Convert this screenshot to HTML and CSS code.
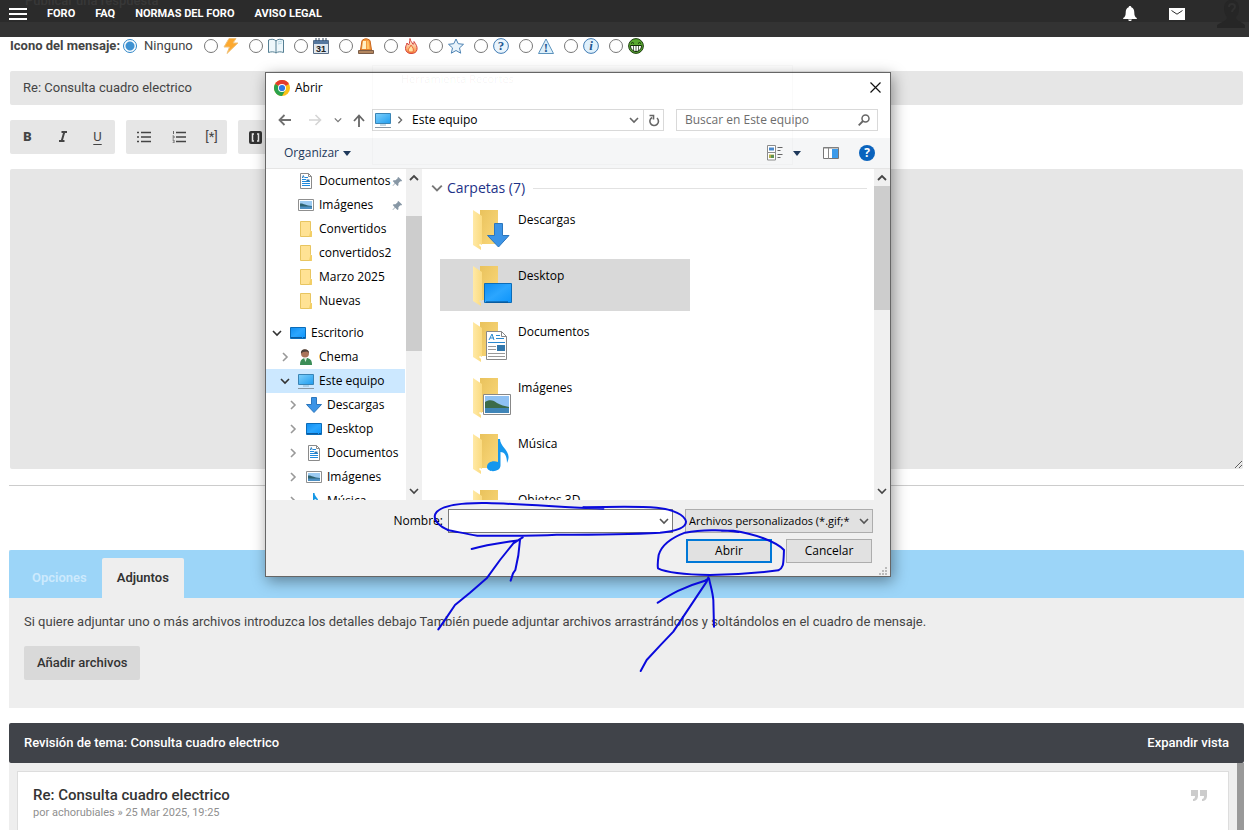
FILE: index.html
```html
<!DOCTYPE html>
<html lang="es">
<head>
    <meta charset="UTF-8">
    <meta name="viewport" content="width=device-width, initial-scale=1.0">
    <title>Publicar una respuesta</title>
    <link rel="stylesheet" href="styles.css">
</head>
<body>
    <!-- shared icons -->
    <svg class="sprite" aria-hidden="true">
        <defs>
            <linearGradient id="gBlue" x1="0" y1="0" x2="1" y2="1">
                <stop offset="0" stop-color="#0f8df0"/><stop offset=".5" stop-color="#2ba6ff"/><stop offset="1" stop-color="#0c94fb"/>
            </linearGradient>
            <linearGradient id="gScreen" x1="0" y1="0" x2="1" y2="1">
                <stop offset="0" stop-color="#7fd0fb"/><stop offset="1" stop-color="#1f9df0"/>
            </linearGradient>
            <linearGradient id="gFolder" x1="0" y1="0" x2="1" y2="0">
                <stop offset="0" stop-color="#ffe9a6"/><stop offset="1" stop-color="#fbdb80"/>
            </linearGradient>
            <linearGradient id="gBack" x1="0" y1="0" x2="1" y2="1">
                <stop offset="0" stop-color="#e9c25c"/><stop offset="1" stop-color="#fbd97c"/>
            </linearGradient>
            <linearGradient id="gFire" x1="0" y1="0" x2="0" y2="1">
                <stop offset="0" stop-color="#fff"/><stop offset="1" stop-color="#f98b34"/>
            </linearGradient>
        </defs>
        <symbol id="chev-down" viewBox="0 0 10 10"><path d="M1 3l4 4 4-4" fill="none" stroke="currentColor" stroke-width="1.6"/></symbol>
        <symbol id="chev-up" viewBox="0 0 10 10"><path d="M1 7l4-4 4 4" fill="none" stroke="currentColor" stroke-width="1.8"/></symbol>
        <symbol id="chev-right" viewBox="0 0 10 10"><path d="M3 1l4 4-4 4" fill="none" stroke="currentColor" stroke-width="1.6"/></symbol>
        <symbol id="pc" viewBox="0 0 16 16"><path d="M.5 1.5h15v10H.5z" fill="url(#gScreen)" stroke="#3a84b5"/><path d="M5 13h6" stroke="#8ab4cf"/><path d="M0 15.500h16" stroke="#8796a3"/></symbol>
        <symbol id="desktop" viewBox="0 0 16 16"><path d="M.5 2.500h15v11H.5z" fill="url(#gBlue)" stroke="#0b6cb8"/><path d="M1 12.500h14" stroke="#0a5aa0" stroke-dasharray="1 0 10 1"/></symbol>
        <symbol id="doc" viewBox="0 0 16 16"><path d="M2.500.5h8l3 3v12h-11z" fill="#fff" stroke="#8a8a8a"/><path d="M10.500.5v3h3" fill="none" stroke="#8a8a8a"/><path d="M4 6.500h4M4 8.500h8M4 10.500h8M4 12.500h8M7 4.500h3" stroke="#1f8ade"/><path d="M4.300 5l1-2.500 1 2.500" fill="none" stroke="#2f7fc0"/><path d="M8.500 6.500h3v2h-3z" fill="#3278ad"/></symbol>
        <symbol id="picture" viewBox="0 0 16 16"><path d="M.5 2.500h15v11H.5z" fill="#fff" stroke="#8f8f8f"/><path d="M2 4h12v8H2z" fill="#9ccbf2"/><path d="M2 6.500c3-.5 5 2 12 2.500V10H2z" fill="#2d6270"/><path d="M2 9.500h12V12H2z" fill="#4c8fc2"/></symbol>
        <symbol id="down" viewBox="0 0 16 16"><path d="M5.500.5h5v7h5L8 15.500.500 7.500h5z" fill="#3c94e6" stroke="#2c76bd"/></symbol>
        <symbol id="minifolder" viewBox="0 0 16 16"><path d="M2.500.5h10v9l1 1v5h-11z" fill="#ffe294" stroke="#e8c560"/><path d="M12.500 9.500l1.500 1.500v4.500h-3z" fill="#f3cf66"/></symbol>
        <symbol id="note" viewBox="0 0 16 16"><path d="M7 0h1.500c0 4 5 5 3.500 10-.5-3-2-4-3.500-4v7a3 2.500 0 1 1-1.500-2z" fill="#1597e5"/></symbol>
        <symbol id="person" viewBox="0 0 16 16"><circle cx="7" cy="4.500" r="4" fill="#a9745a"/><path d="M3 4.500C2-1 11-1 11 4L9 2.500 5 3z" fill="#4b4039"/><path d="M2 16c0-5 2-7 6-7 4 0 6 2 6 7z" fill="#3b8d57"/><path d="M6 9l1.500 4 1.500-4z" fill="#dceee0"/></symbol>
        <symbol id="pin" viewBox="0 0 12 12"><path d="M7 1l4 4-1 1-1-.3L7 8v2L6 11 3.500 8.500 1 11l-.5-.5L3 8 .800 5.500l1-1h2L6.200 2.500 6 2z" fill="#8797a5"/></symbol>
        <symbol id="bigfolder" viewBox="0 0 40 40"><path d="M8 0h18v34H8z" fill="url(#gBack)"/><path d="M1 0l9 6v29l-2-1-1 1 2 2v3l-8-5z" fill="url(#gFolder)"/></symbol>
    </svg>

    <header class="topbar">
        <span class="behind-title">Publicar una respuesta</span>
        <button class="burger" aria-label="Menú"><span></span><span></span><span></span></button>
        <nav class="topnav">
            <a href="#">FORO</a>
            <a href="#">FAQ</a>
            <a href="#">NORMAS DEL FORO</a>
            <a href="#">AVISO LEGAL</a>
        </nav>
        <div class="topicons">
            <a href="#" aria-label="Notificaciones"><svg width="14" height="16" viewBox="0 0 14 16"><path d="M7 0c1 0 1.300.7 1.300 1.300C10.500 2 11.300 4 11.300 6.500c0 3 .7 4.500 2.500 5.500v1H.200v-1c1.800-1 2.500-2.500 2.500-5.500 0-2.500.8-4.500 3-5.200C5.700.7 6 0 7 0zM5.200 13.500h3.600C8.700 15.500 5.300 15.500 5.200 13.500z" fill="#fff"/></svg></a>
            <a href="#" aria-label="Mensajes"><svg width="16" height="12" viewBox="0 0 16 12"><path d="M0 0h16v12H0z" fill="#fff"/><path d="M2.500 2.500L8 6.200l5.500-3.700" fill="none" stroke="#2b2b2b"/></svg></a>
            <a href="#" aria-label="Perfil"><svg width="28" height="28" viewBox="0 0 28 28"><path d="M7 8c0-11 15-11 15 0 0 5-1 7-3 9 0 4 3 3 9 8v3H0v-3c6-4 10-4 10-8C8 15 7 12 7 8z" fill="#262626"/><path d="M12 7c0-4 6-4 6 0 0 2-3 2-3 5" fill="none" stroke="#303030" stroke-width="2"/></svg></a>
        </div>
    </header>

    <main class="page">
        <fieldset class="icons-row" aria-label="Icono del mensaje">
            <span class="icons-label">Icono del mensaje:</span>
            <label class="none"><input type="radio" name="icon" checked> Ninguno</label>
            <label class="pick"><input type="radio" name="icon" aria-label="Rayo"><svg viewBox="0 0 16 16"><path d="M6 .5h7L10 5h5L4 15.500l2.500-6.500H1z" fill="#fda92f" stroke="#f0c27c"/></svg></label>
            <label class="pick"><input type="radio" name="icon" aria-label="Libro"><svg viewBox="0 0 16 16"><path d="M.5 2C4 .8 6 1 8 3c2-2 4-2.200 7.500-1v12.500c-3-1-5.500-1-7.500.5-2-1.500-4.500-1.500-7.500-.5z" fill="#eef7fb" stroke="#557f93"/><path d="M8 3v12" stroke="#557f93"/><path d="M10 4l4-1M10 6l4-1" stroke="#b8d9e6"/></svg></label>
            <label class="pick"><input type="radio" name="icon" aria-label="Calendario"><svg viewBox="0 0 16 16"><path d="M.5 2.500h15v13H.5z" fill="#dfe7ef" stroke="#596d86"/><path d="M1 2h14v4H1z" fill="#54779f"/><path d="M3 0v3M6 0v3M10 0v3M13 0v3" stroke="#394a61"/><text x="8" y="14" class="cal-num">31</text></svg></label>
            <label class="pick"><input type="radio" name="icon" aria-label="Sirena"><svg viewBox="0 0 16 16"><path d="M2.500 12L4 2.500Q8-1 12 2.500L13.500 12z" fill="#f59a3d" stroke="#c9661b"/><path d="M5 3h3v8H4z" fill="#fff0c4"/><path d="M9 3h1.500l1 8H9z" fill="#ffc467"/><path d="M.5 12.500h15v3H.5z" fill="#b3865f" stroke="#7b5c47"/></svg></label>
            <label class="pick"><input type="radio" name="icon" aria-label="Fuego"><svg viewBox="0 0 16 16"><path d="M7 .5c.5 3 2 3.500 3 6 1-.5 1-2 1-3 2 3 3.500 5 3 8-.5 3-3 4-6 4s-5.500-2-5.500-5C2.500 8 3.500 7 4 5l1.500 2C7 5 6.500 3 7 .5z" fill="url(#gFire)" stroke="#d5413b"/><path d="M8 7c2 3 3 4 2 7H6c-2-3 1-4 2-7z" fill="#ffe2a0" stroke="#ec6a3c"/></svg></label>
            <label class="pick"><input type="radio" name="icon" aria-label="Estrella"><svg viewBox="0 0 16 16"><path d="M8 1l2.200 4.700 5.300.6-4 3.600 1.200 5.300L8 12.500l-4.700 2.700 1.200-5.300-4-3.600 5.300-.6z" fill="#e8f3fb" stroke="#4c82b3"/></svg></label>
            <label class="pick"><input type="radio" name="icon" aria-label="Pregunta"><svg viewBox="0 0 16 16"><circle cx="8" cy="8" r="7.400" fill="#e9f4fc" stroke="#3f7ab3"/><text x="8" y="12" class="glyph">?</text></svg></label>
            <label class="pick"><input type="radio" name="icon" aria-label="Aviso"><svg viewBox="0 0 16 16"><path d="M8 1l7.500 14.500H.5z" fill="#dceffa" stroke="#5c93bd"/><text x="8" y="14" class="glyph">!</text></svg></label>
            <label class="pick"><input type="radio" name="icon" aria-label="Información"><svg viewBox="0 0 16 16"><circle cx="8" cy="8" r="7.400" fill="#dff0fb" stroke="#3f7ab3"/><text x="8" y="12" class="glyph slant">i</text></svg></label>
            <label class="pick"><input type="radio" name="icon" aria-label="Risa"><svg viewBox="0 0 16 16"><circle cx="8" cy="8" r="7.400" fill="#58a82f" stroke="#1f3d12"/><path d="M3 5.500q1.500-2 3 0M10 5.500q1.500-2 3 0" fill="none" stroke="#132c0a"/><path d="M2.500 7.500h11c0 8-11 8-11 0z" fill="#fff" stroke="#132c0a"/><path d="M5.500 8v5M8 8v5.500M10.500 8v5" stroke="#132c0a" stroke-width=".7"/></svg></label>
        </fieldset>

        <input class="subject" type="text" aria-label="Asunto" value="Re: Consulta cuadro electrico">

        <div class="editbar">
            <div class="group">
                <button class="b" aria-label="Negrita">B</button>
                <button class="i" aria-label="Cursiva"><svg width="10" height="12" viewBox="0 0 10 12"><path d="M3.500 1H9M1 10h5.500M6.300 1L3.700 10" fill="none" stroke="#444" stroke-width="2"/></svg></button>
                <button class="u" aria-label="Subrayado">U</button>
            </div>
            <div class="group narrow">
                <button aria-label="Lista"><svg width="14" height="12" viewBox="0 0 14 12"><path d="M4 1.500h10M4 6h10M4 10.500h10M0 1.500h2M0 6h2M0 10.500h2" stroke="#444" stroke-width="1.300"/></svg></button>
                <button aria-label="Lista numerada"><svg width="14" height="12" viewBox="0 0 14 12"><path d="M4 1.500h10M4 6h10M4 10.500h10" stroke="#444" stroke-width="1.300"/><path d="M1.500 0v3M.5 5h1.500v2H.5M.5 9h1.500v3H.5" fill="none" stroke="#666"/></svg></button>
                <button aria-label="Elemento de lista">[*]</button>
            </div>
            <div class="group">
                <button aria-label="Código"><svg width="13" height="13" viewBox="0 0 13 13"><rect width="13" height="13" rx="2" fill="#333"/><path d="M5 3H3.500v7H5M8 3h1.500v7H8" fill="none" stroke="#e6e6e6" stroke-width="1.500"/></svg></button>
            </div>
        </div>

        <textarea class="message" aria-label="Mensaje"></textarea>
        <hr>

        <section class="attach">
            <div class="tabs">
                <a href="#" class="tab">Opciones</a>
                <a href="#" class="tab active">Adjuntos</a>
            </div>
            <div class="attach-body">
                <p>Si quiere adjuntar uno o más archivos introduzca los detalles debajo También puede adjuntar archivos arrastrándolos y soltándolos en el cuadro de mensaje.</p>
                <button class="add">Añadir archivos</button>
            </div>
        </section>

        <section class="review">
            <h3 class="review-head"><span>Revisión de tema: Consulta cuadro electrico</span><a href="#">Expandir vista</a></h3>
            <div class="review-list">
                <article class="post">
                    <div>
                        <h4>Re: Consulta cuadro electrico</h4>
                        <p>por achorubiales » 25 Mar 2025, 19:25</p>
                    </div>
                    <button aria-label="Citar"><svg width="16" height="11" viewBox="0 0 16 11"><path d="M0 0h7v6c0 3-2 5-5 5V9c1.500 0 2-1 2-3H0zM9 0h7v6c0 3-2 5-5 5V9c1.500 0 2-1 2-3H9z" fill="#ccc"/></svg></button>
                </article>
                <div class="review-scroll"></div>
            </div>
        </section>
    </main>

    <div class="dialog" role="dialog" aria-label="Abrir">
        <div class="titlebar">
            <svg width="16" height="16" viewBox="0 0 16 16"><circle cx="8" cy="8" r="8" fill="#fbc116"/><path d="M8 8L1.070 4A8 8 0 0 1 14.930 4z" fill="#e33b2e"/><path d="M1.070 4A8 8 0 0 0 8 16l3.500-6L8 8z" fill="#2ba24c"/><circle cx="8" cy="8" r="4" fill="#fff"/><circle cx="8" cy="8" r="3.100" fill="#2f78e4"/></svg>
            <span>Abrir</span>
            <button aria-label="Cerrar"><svg width="11" height="11" viewBox="0 0 11 11"><path d="M.5.5l10 10M10.500.5l-10 10" stroke="#111" stroke-width="1.200"/></svg></button>
        </div>

        <div class="navbar">
            <div class="arrows">
                <button aria-label="Atrás"><svg width="14" height="12" viewBox="0 0 14 12"><path d="M13 6H2M6.500 1L1.500 6l5 5" fill="none" stroke="#707070" stroke-width="1.800"/></svg></button>
                <button aria-label="Adelante"><svg width="14" height="12" viewBox="0 0 14 12"><path d="M1 6h11M7.500 1l5 5-5 5" fill="none" stroke="#d5d5d5" stroke-width="1.600"/></svg></button>
                <button aria-label="Recientes"><svg class="c8"><use href="#chev-down"/></svg></button>
                <button aria-label="Subir"><svg width="12" height="13" viewBox="0 0 12 13"><path d="M6 13V2M1 7l5-5.500L11 7" fill="none" stroke="#666" stroke-width="1.800"/></svg></button>
            </div>
            <div class="address">
                <svg class="s16"><use href="#pc"/></svg>
                <svg class="c8"><use href="#chev-right"/></svg>
                <span>Este equipo</span>
                <svg class="c10 end"><use href="#chev-down"/></svg>
                <button aria-label="Actualizar"><svg width="12" height="13" viewBox="0 0 12 13"><path d="M9 4A4.300 4.300 0 1 1 4 3.500M1.500 1.500h4v4" fill="none" stroke="#666" stroke-width="1.600"/></svg></button>
            </div>
            <div class="search">
                <input type="text" aria-label="Buscar" placeholder="Buscar en Este equipo">
                <svg width="12" height="12" viewBox="0 0 12 12"><circle cx="7.500" cy="4.500" r="3.500" fill="none" stroke="#666" stroke-width="1.500"/><path d="M5 7L.700 11.300" stroke="#666" stroke-width="1.800"/></svg>
            </div>
        </div>

        <div class="tools">
            <button class="organize">Organizar <svg width="8" height="5" viewBox="0 0 8 5"><path d="M0 0h8L4 5z" fill="#1e395b"/></svg></button>
            <button aria-label="Vista"><svg width="34" height="16" viewBox="0 0 34 16"><path d="M.5.5h8v7h-8zM.5 7.500h8v7.500h-8z" fill="#fff" stroke="#8a8a8a"/><path d="M2 2.500h5v3H2z" fill="#4a89cc"/><path d="M2 9.500h5v3.500H2z" fill="#b6b04a"/><path d="M4 10h3v3H4z" fill="#5f9150"/><path d="M10.500 2.500h5M10.500 5.500h3M10.500 9.500h5M10.500 12.500h3" stroke="#666"/><path d="M26 6h8l-4 5z" fill="#1e395b"/></svg></button>
            <button aria-label="Panel de vista previa"><svg width="16" height="12" viewBox="0 0 16 12"><path d="M.5.5h15v11H.5z" fill="#fff" stroke="#777"/><path d="M.5 1h15M5.500 1v11" stroke="#888"/><path d="M9 2h6v9H9z" fill="#3d9bea"/></svg></button>
            <button class="help" aria-label="Ayuda">?</button>
        </div>

        <div class="panes">
            <ul class="tree">
                <li class="l2"><svg class="s16"><use href="#doc"/></svg>Documentos<svg class="pin"><use href="#pin"/></svg></li>
                <li class="l2"><svg class="s16"><use href="#picture"/></svg>Imágenes<svg class="pin"><use href="#pin"/></svg></li>
                <li class="l2"><svg class="s16"><use href="#minifolder"/></svg>Convertidos</li>
                <li class="l2"><svg class="s16"><use href="#minifolder"/></svg>convertidos2</li>
                <li class="l2"><svg class="s16"><use href="#minifolder"/></svg>Marzo 2025</li>
                <li class="l2 last"><svg class="s16"><use href="#minifolder"/></svg>Nuevas</li>
                <li class="n1 open"><svg class="c10"><use href="#chev-down"/></svg><svg class="s16"><use href="#desktop"/></svg>Escritorio</li>
                <li class="n2"><svg class="c10"><use href="#chev-right"/></svg><svg class="s16"><use href="#person"/></svg>Chema</li>
                <li class="n2 open selected"><svg class="c10"><use href="#chev-down"/></svg><svg class="s16"><use href="#pc"/></svg>Este equipo</li>
                <li class="n3"><svg class="c10"><use href="#chev-right"/></svg><svg class="s16"><use href="#down"/></svg>Descargas</li>
                <li class="n3"><svg class="c10"><use href="#chev-right"/></svg><svg class="s16"><use href="#desktop"/></svg>Desktop</li>
                <li class="n3"><svg class="c10"><use href="#chev-right"/></svg><svg class="s16"><use href="#doc"/></svg>Documentos</li>
                <li class="n3"><svg class="c10"><use href="#chev-right"/></svg><svg class="s16"><use href="#picture"/></svg>Imágenes</li>
                <li class="n3"><svg class="c10"><use href="#chev-right"/></svg><svg class="s16"><use href="#note"/></svg>Música</li>
            </ul>
            <div class="scroll tree-scroll">
                <svg class="c10"><use href="#chev-up"/></svg>
                <span class="thumb"></span>
                <svg class="c10"><use href="#chev-down"/></svg>
            </div>
            <div class="files">
                <h2><svg class="c12"><use href="#chev-down"/></svg>Carpetas (7)</h2>
                <ul>
                    <li><svg viewBox="0 0 40 40"><use href="#bigfolder"/><path d="M22.500 13.500h8v12h6.500L26.500 37 15.500 25.500h7z" fill="#3c94e6" stroke="#2c76bd"/></svg>Descargas</li>
                    <li class="selected"><svg viewBox="0 0 40 40"><use href="#bigfolder"/><path d="M12.500 17.500h27v19h-27z" fill="url(#gBlue)" stroke="#0b6cb8"/><path d="M14 36h22" stroke="#064b86"/></svg>Desktop</li>
                    <li><svg viewBox="0 0 40 40"><use href="#bigfolder"/><path d="M14.500 9.500h15l5 5v23h-20z" fill="#fff" stroke="#888"/><path d="M29.500 9.500v5h5" fill="none" stroke="#888"/><path d="M17 18l3-6 2 6M18 16h4" fill="none" stroke="#2a88cf"/><path d="M24 13.500h4M24 16.500h8M16 20.500h17" stroke="#2a88cf"/><path d="M16 24.500h8M16 27.500h8M16 31.500h17M16 34.500h17" stroke="#999"/><path d="M25 23h8v6h-8z" fill="#3278ad"/></svg>Documentos</li>
                    <li><svg viewBox="0 0 40 40"><use href="#bigfolder"/><path d="M11.500 16.500h27v20h-27z" fill="#fff" stroke="#888"/><path d="M13 18h24v17H13z" fill="#8fc1f3"/><path d="M13 24c4-3 9-2 12 1 3 2 8 3 12 4v2H13z" fill="#3c6b49"/><path d="M13 30h24v5H13z" fill="#3f85b8"/></svg>Imágenes</li>
                    <li><svg viewBox="0 0 40 40"><use href="#bigfolder"/><path d="M26 5h2c0 9 13 12 7 24 0-8-3-11-6.500-11v13.500c0 7-13.500 7.500-13.500 1.500 0-5 6-7 11-5z" fill="#1597ee"/></svg>Música</li>
                    <li><svg viewBox="0 0 40 40"><use href="#bigfolder"/></svg>Objetos 3D</li>
                </ul>
            </div>
            <div class="scroll files-scroll">
                <svg class="c10"><use href="#chev-up"/></svg>
                <span class="thumb"></span>
                <svg class="c10"><use href="#chev-down"/></svg>
            </div>
        </div>

        <div class="foot">
            <div class="foot-row">
                <label for="fname">Nombre:</label>
                <div class="combo"><input type="text" id="fname"><svg class="c10"><use href="#chev-down"/></svg></div>
                <div class="filter">
                    <select aria-label="Tipo de archivo"><option>Archivos personalizados (*.gif;*</option></select>
                    <svg class="c10"><use href="#chev-down"/></svg>
                </div>
            </div>
            <div class="foot-row buttons">
                <button class="primary">Abrir</button>
                <button>Cancelar</button>
            </div>
            <svg class="grip" width="9" height="9" viewBox="0 0 9 9"><path d="M6 0h2v2H6zM6 3h2v2H6zM6 6h2v2H6zM3 3h2v2H3zM3 6h2v2H3zM0 6h2v2H0z" fill="#bbb"/></svg>
        </div>
    </div>

    <div class="ghost">Herramienta Recortes</div>

    <!-- pen marks -->
    <svg class="ink" width="510" height="190" viewBox="0 0 1530 570">
        <path d="M180 122C140 108 130 85 136 72C150 45 220 38 290 39C400 42 500 50 640 56M580 52C660 50 740 48 800 53C850 58 885 75 888 95C888 115 850 124 810 128C700 134 600 134 500 134C420 138 330 137 262 137C230 132 205 126 172 120"/>
        <path d="M145 418L168 385L195 345L240 308L290 265L330 210L370 160L398 142M245 177C290 164 340 158 390 150C388 180 385 205 376 240L369 250L362 272"/>
        <path d="M1045 126C1000 118 930 120 885 128C840 145 815 165 806 195C803 215 802 225 804 235C830 248 900 254 960 255C1040 254 1110 248 1165 241C1182 232 1180 220 1182 180C1160 155 1090 130 1030 122L995 122"/>
        <path d="M752 543L770 510L810 467L850 425L900 350L950 275L955 262M803 338C840 315 880 290 945 272L957 265C962 290 968 305 970 330L972 410"/>
    </svg>
</body>
</html>
```
FILE: styles.css
```css
* {
    box-sizing: border-box;
}

body {
    margin: 0;
    min-height: 100vh;
    display: flex;
    flex-direction: column;
    position: relative;
    background: #fff;
    color: #444;
    font-family: Roboto, "Liberation Sans", sans-serif;
    font-size: 13px;
    line-height: 18px;
}

button, input, select, textarea {
    font: inherit;
    color: inherit;
    margin: 0;
}

button {
    border: none;
    background: none;
    padding: 0;
}

a {
    color: inherit;
    text-decoration: none;
}

svg {
    display: block;
    flex: none;
}

ul, h2, h3, h4, p {
    margin: 0;
    padding: 0;
    list-style: none;
}

.sprite {
    position: absolute;
    width: 0;
    height: 0;
}

.s16 { width: 16px; height: 16px; }
.c8 { width: 8px; height: 8px; }
.c10 { width: 10px; height: 10px; }
.c12 { width: 12px; height: 12px; }

/* top bar */
.topbar {
    position: relative;
    display: flex;
    align-items: flex-start;
    height: 37px;
    padding: 0 4px 0 9px;
    background: linear-gradient(#2b2b2b 22px, #333 22px);
    color: #fff;
    overflow: hidden;
}

.behind-title {
    position: absolute;
    left: 25px;
    top: -8px;
    font-size: 13px;
    font-weight: 500;
    color: #383838;
}

.burger {
    position: relative;
    display: flex;
    flex-direction: column;
    gap: 3px;
    width: 18px;
    margin-top: 8px;
}

.burger span {
    height: 2px;
    background: #fff;
}

.topnav {
    position: relative;
    display: flex;
    gap: 20px;
    margin: 5px 0 0 20px;
    font-size: 11px;
    font-weight: 700;
}

.topicons {
    display: flex;
    align-items: center;
    gap: 32px;
    height: 28px;
    margin-left: auto;
}

/* posting form */
.page {
    flex: 1;
    display: flex;
    flex-direction: column;
    padding: 0 5px 0 9px;
}

.icons-row {
    display: flex;
    align-items: center;
    height: 19px;
    border: 0;
    margin: 0 1px;
    padding: 0;
}

.icons-label {
    font-weight: 700;
}

.icons-row input {
    appearance: none;
    width: 14px;
    height: 14px;
    border: 1px solid #777;
    border-radius: 50%;
    background: #fff;
}

.icons-row input:checked {
    border-color: #2f86c8;
    background: radial-gradient(#3f92d2 4px, #fff 5px);
}

.none, .pick {
    display: flex;
    align-items: center;
}

.none {
    gap: 7px;
    margin: 0 11px 0 3px;
}

.pick {
    gap: 5px;
    width: 45px;
}

.pick svg {
    width: 16px;
    height: 16px;
}

.glyph {
    font: bold 13px "Liberation Serif", serif;
    text-anchor: middle;
    fill: #1f5790;
}

.slant {
    font-style: italic;
}

.cal-num {
    font: bold 9px "Liberation Sans", sans-serif;
    text-anchor: middle;
    fill: #222;
}

.subject {
    height: 34px;
    margin: 15px 1px;
    padding: 0 13px 2px;
    border: 0;
    border-radius: 2px;
    background: #e6e6e6;
}

.editbar {
    display: flex;
    gap: 11px;
    margin: 0 1px 15px;
}

.group {
    display: flex;
    height: 34px;
    border-radius: 2px;
    background: #e6e6e6;
}

.group button {
    display: flex;
    align-items: center;
    justify-content: center;
    width: 35px;
}

.group .b {
    font-weight: 900;
}

.group .u {
    text-decoration: underline;
    text-underline-offset: 3px;
}

.narrow button:last-child {
    width: 31px;
}

.message {
    height: 300px;
    margin: 0 1px;
    border: 0;
    border-radius: 2px;
    background: #e6e6e6;
    resize: vertical;
}

hr {
    width: 100%;
    height: 1px;
    margin: 16px 0 64px;
    border: 0;
    background: #ccc;
}

/* attachments */
.attach {
    background: #eee;
}

.tabs {
    display: flex;
    align-items: flex-end;
    height: 48px;
    padding-left: 8px;
    border-radius: 2px 2px 0 0;
    background: #9cd5f8;
}

.tab {
    height: 40px;
    padding: 0 15px;
    border-radius: 2px 2px 0 0;
    font-weight: 600;
    line-height: 40px;
    color: #cdeafd;
}

.tab.active {
    background: #eee;
    color: #333;
}

.attach-body {
    padding: 15px 15px 28px;
}

.add {
    margin-top: 15px;
    padding: 8px 13px;
    border-radius: 2px;
    background: #d9d9d9;
    font-weight: 500;
    color: #333;
}

/* topic review */
.review {
    flex: 1;
    display: flex;
    flex-direction: column;
    margin-top: 15px;
}

.review-head {
    display: flex;
    justify-content: space-between;
    padding: 11px 15px;
    border-radius: 2px;
    background: #404349;
    font-size: 13px;
    font-weight: 500;
    color: #fff;
}

.review-list {
    flex: 1;
    display: flex;
    padding-left: 8px;
    background: #eee;
}

.post {
    flex: 1;
    display: flex;
    justify-content: space-between;
    align-items: flex-start;
    margin: 8px 8px 0 0;
    padding: 14px 21px 0 15px;
    border: 1px solid #ddd;
    border-bottom: 0;
    background: #fff;
}

.post h4 {
    font-size: 15px;
    font-weight: 500;
    color: #333;
}

.post p {
    font-size: 11px;
    color: #8f8f8f;
}

.post button {
    margin-top: 4px;
}

.review-scroll {
    width: 7px;
    background: #999;
}

/* file dialog */
.dialog {
    position: absolute;
    left: 265px;
    top: 72px;
    width: 626px;
    border: 1px solid #666;
    background: #fff;
    box-shadow: 2px 4px 14px rgba(0, 0, 0, 0.4);
    font-family: "Open Sans", "Noto Sans", sans-serif;
    font-size: 12px;
    line-height: 16px;
    color: #000;
}

.titlebar {
    display: flex;
    align-items: center;
    gap: 5px;
    height: 29px;
    padding: 0 9px 0 8px;
}

.titlebar button {
    margin-left: auto;
}

.navbar {
    display: flex;
    align-items: center;
    height: 36px;
    padding: 0 12px;
}

.arrows {
    display: flex;
    align-items: center;
    width: 94px;
    color: #777;
}

.arrows button:nth-child(2) { margin-left: 16px; }
.arrows button:nth-child(3) { margin-left: 12px; }
.arrows button:nth-child(4) { margin-left: 11px; }

.address {
    display: flex;
    align-items: center;
    width: 292px;
    height: 22px;
    padding-left: 2px;
    border: 1px solid #d9d9d9;
    color: #666;
}

.address span {
    margin-left: 8px;
    color: #000;
}

.address .c8 {
    margin-left: 5px;
}

.address .end {
    margin: 0 4px 0 auto;
}

.address button {
    display: flex;
    align-items: center;
    justify-content: center;
    width: 20px;
    height: 20px;
    border-left: 1px solid #d9d9d9;
}

.search {
    flex: 1;
    display: flex;
    align-items: center;
    height: 22px;
    margin-left: 12px;
    padding: 0 7px 0 8px;
    border: 1px solid #d9d9d9;
}

.search input {
    flex: 1;
    min-width: 0;
    padding: 0;
    border: 0;
    outline: 0;
}

.search input::placeholder {
    color: #6d6d6d;
}

.tools {
    display: flex;
    align-items: center;
    gap: 22px;
    height: 31px;
    padding: 0 15px 0 18px;
    border-bottom: 1px solid #e5e5e5;
    background: #f5f6f7;
}

.organize {
    display: flex;
    align-items: center;
    gap: 4px;
    margin-right: auto;
    color: #1e395b;
}

.help {
    width: 16px;
    height: 16px;
    margin-left: -2px;
    border-radius: 50%;
    background: #0a63bd;
    color: #fff;
    font-weight: 700;
    line-height: 16px;
}

.panes {
    display: flex;
    height: 331px;
    overflow: hidden;
}

.tree {
    width: 140px;
    padding-right: 1px;
}

.tree li {
    display: flex;
    align-items: center;
    height: 24px;
    white-space: nowrap;
}

.tree .s16 {
    margin-right: 5px;
}

.tree .c10 {
    margin-right: 8px;
    color: #999;
}

.tree .open .c10 {
    color: #333;
}

.tree .l2 { padding-left: 32px; }
.tree .n1 { padding-left: 6px; }
.tree .n2 { padding-left: 14px; }
.tree .n3 { padding-left: 22px; }
.tree .last { margin-bottom: 8px; }
.tree .selected { background: #cce8ff; }

.pin {
    width: 11px;
    height: 11px;
    margin: 0 2px 0 auto;
}

.scroll {
    display: flex;
    flex-direction: column;
    align-items: center;
    justify-content: space-between;
    width: 16px;
    padding: 4px 0;
    background: #f0f0f0;
    color: #444;
}

.thumb {
    width: 16px;
    background: #cdcdcd;
}

.tree-scroll .thumb {
    height: 135px;
    margin: 33px 0 auto;
}

.files-scroll .thumb {
    height: 124px;
    margin: 3px 0 auto;
}

.files {
    flex: 1;
    padding: 8px 7px 0 9px;
}

.files h2 {
    display: flex;
    align-items: center;
    gap: 4px;
    height: 22px;
    font-size: 14px;
    font-weight: 400;
    color: #1e3287;
}

.files h2 svg {
    color: #777;
}

.files h2::after {
    content: "";
    flex: 1;
    height: 1px;
    margin-left: 4px;
    background: #e2e2e2;
}

.files ul {
    display: grid;
    gap: 4px;
    padding: 4px 0 0 9px;
}

.files li {
    display: flex;
    gap: 6px;
    width: 250px;
    height: 52px;
    padding: 9px 0 0 32px;
}

.files li svg {
    width: 40px;
    height: 40px;
    margin-top: -2px;
}

.files .selected {
    background: #d9d9d9;
}

.foot {
    position: relative;
    padding: 9px 17px 13px;
    background: #f0f0f0;
}

.foot-row {
    display: flex;
    align-items: center;
    justify-content: flex-end;
}

.combo, .filter {
    position: relative;
    height: 24px;
}

.combo {
    width: 225px;
    margin: 0 12px 0 5px;
}

.filter {
    width: 188px;
}

.combo input, .filter select {
    appearance: none;
    display: block;
    width: 100%;
    height: 24px;
    border: 1px solid #7a7a7a;
    border-radius: 0;
    background: #fff;
}

.filter select {
    padding: 0 0 0 3px;
    border-color: #adadad;
    background: #e1e1e1;
    font-size: 11px;
}

.combo svg, .filter svg {
    position: absolute;
    right: 4px;
    top: 7px;
    color: #555;
    pointer-events: none;
}

.buttons {
    gap: 14px;
    margin-top: 6px;
    padding-right: 1px;
}

.buttons button {
    width: 86px;
    height: 24px;
    border: 1px solid #adadad;
    background: #e1e1e1;
}

.buttons .primary {
    border: 2px solid #0078d7;
}

.grip {
    position: absolute;
    right: 2px;
    bottom: 0;
}

/* fading window left over the dialog */
.ghost {
    position: absolute;
    left: 372px;
    top: 65px;
    width: 421px;
    height: 100px;
    padding: 5px 0 0 28px;
    border: 1px solid rgba(0, 0, 0, 0.02);
    font-family: "Open Sans", "Noto Sans", sans-serif;
    font-size: 11px;
    line-height: 16px;
    color: rgba(0, 0, 0, 0.05);
    pointer-events: none;
}

.ink {
    position: absolute;
    left: 390px;
    top: 490px;
    fill: none;
    stroke: #0a0adc;
    stroke-width: 6;
    stroke-linecap: round;
    stroke-linejoin: round;
    pointer-events: none;
}
```
